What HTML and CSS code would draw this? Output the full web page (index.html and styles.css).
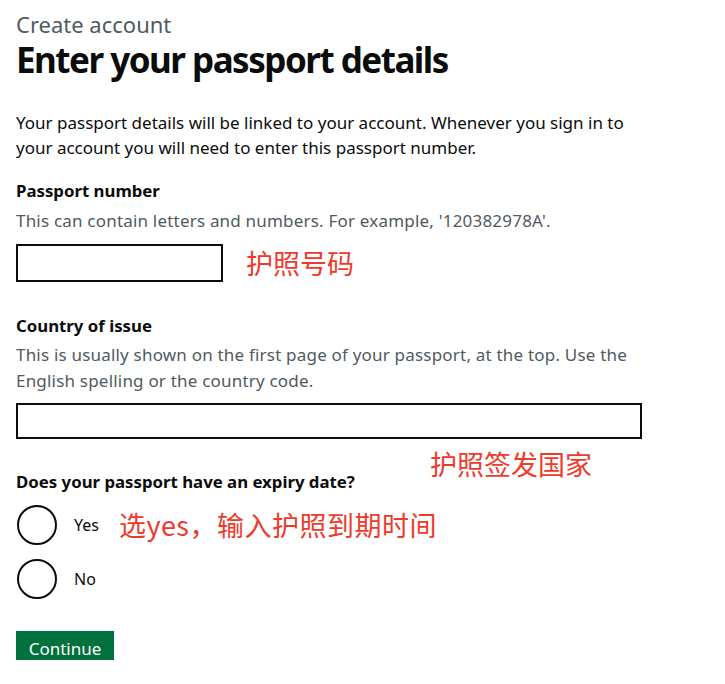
FILE: index.html
```html
<!DOCTYPE html>
<html lang="en">
<head>
<meta charset="utf-8">
<title>Enter your passport details</title>
<link rel="stylesheet" href="styles.css">
</head>
<body>
<main class="page">
  <span class="caption">Create account</span>
  <h1 class="title">Enter your passport details</h1>
  <p class="body">Your passport details will be linked to your account. Whenever you sign in to your account you will need to enter this passport number.</p>

  <label class="label label-first" for="pn">Passport number</label>
  <div class="hint hint-one">This can contain letters and numbers. For example, '120382978A'.</div>
  <div class="input-row">
    <input class="input input-short" id="pn" type="text">
    <span class="note">护照号码</span>
  </div>

  <label class="label label-second" for="country">Country of issue</label>
  <div class="hint hint-two">This is usually shown on the first page of your passport, at the top. Use the English spelling or the country code.</div>
  <input class="input input-long" id="country" type="text">
  <div class="note note-country">护照签发国家</div>

  <fieldset class="fieldset">
    <legend class="legend">Does your passport have an expiry date?</legend>
    <div class="radios">
      <label class="radio">
        <span class="circle"></span>
        <span class="radio-label">Yes</span>
        <span class="note note-yes">选yes，输入护照到期时间</span>
      </label>
      <label class="radio">
        <span class="circle"></span>
        <span class="radio-label">No</span>
      </label>
    </div>
  </fieldset>

  <button class="button" type="button">Continue</button>
</main>
</body>
</html>
```
FILE: styles.css
```css
html, body {
  margin: 0;
  padding: 0;
  background: #ffffff;
}

.page {
  height: 660px;
  overflow: hidden;
  padding: 12px 0 0 16px;
  box-sizing: border-box;
  display: flex;
  flex-direction: column;
  align-items: flex-start;
  font-family: "Noto Sans", "Liberation Sans", sans-serif;
  color: #0b0c0c;
}

.page > * {
  flex-shrink: 0;
}

.caption {
  display: block;
  font-size: 22px;
  line-height: 24px;
  color: #505a5f;
}

.title {
  margin: 6px 0 0;
  font-size: 35px;
  line-height: 36px;
  font-weight: 700;
  letter-spacing: -1.5px;
}

.body {
  margin: 32px 0 0;
  font-size: 17px;
  line-height: 25px;
  width: 640px;
}

.label {
  display: block;
  font-size: 16.8px;
  line-height: 24px;
  font-weight: 700;
}

.label-first { margin-top: 19px; }
.label-second { margin-top: 32px; }

.hint {
  font-size: 17px;
  letter-spacing: 0.2px;
  color: #505a5f;
}

.hint-one {
  margin-top: 6px;
  line-height: 24px;
}

.hint-two {
  margin-top: 4px;
  line-height: 26px;
  width: 612px;
}

.input-row {
  margin-top: 11px;
  display: flex;
  align-items: center;
  gap: 23px;
}

.input {
  box-sizing: border-box;
  border: 2px solid #0b0c0c;
  background: #ffffff;
  margin: 0;
  padding: 0 6px;
  font: inherit;
}

.input-short {
  width: 207px;
  height: 38px;
}

.input-long {
  margin-top: 9px;
  width: 626px;
  height: 36px;
}

.note {
  font-family: "Noto Sans CJK SC", "Noto Sans", sans-serif;
  font-size: 27px;
  line-height: 28px;
  color: #ee3a2b;
  font-weight: 400;
}

.note-country {
  margin: 15px 0 0 414px;
  line-height: 20px;
}

.fieldset {
  margin: 0;
  padding: 0;
  border: 0;
  min-width: 0;
}

.legend {
  padding: 0;
  font-size: 16.8px;
  line-height: 16px;
  font-weight: 700;
}

.radios {
  margin-top: 15px;
  display: flex;
  flex-direction: column;
  gap: 14px;
}

.radio {
  display: flex;
  align-items: center;
  height: 40px;
}

.circle {
  box-sizing: border-box;
  width: 40px;
  height: 40px;
  border: 2px solid #0b0c0c;
  border-radius: 50%;
  margin-left: 1px;
}

.radio-label {
  margin-left: 17px;
  font-size: 16px;
  color: #0b0c0c;
}

.note-yes {
  margin-left: 20px;
  letter-spacing: 0.5px;
}

.button {
  margin-top: 32px;
  width: 98px;
  height: 29px;
  border: 0;
  padding: 0;
  background: #00703c;
  color: #ffffff;
  font-family: "Noto Sans", "Liberation Sans", sans-serif;
  font-size: 17px;
  line-height: 20px;
  padding-top: 6px;
  text-align: center;
}
```
